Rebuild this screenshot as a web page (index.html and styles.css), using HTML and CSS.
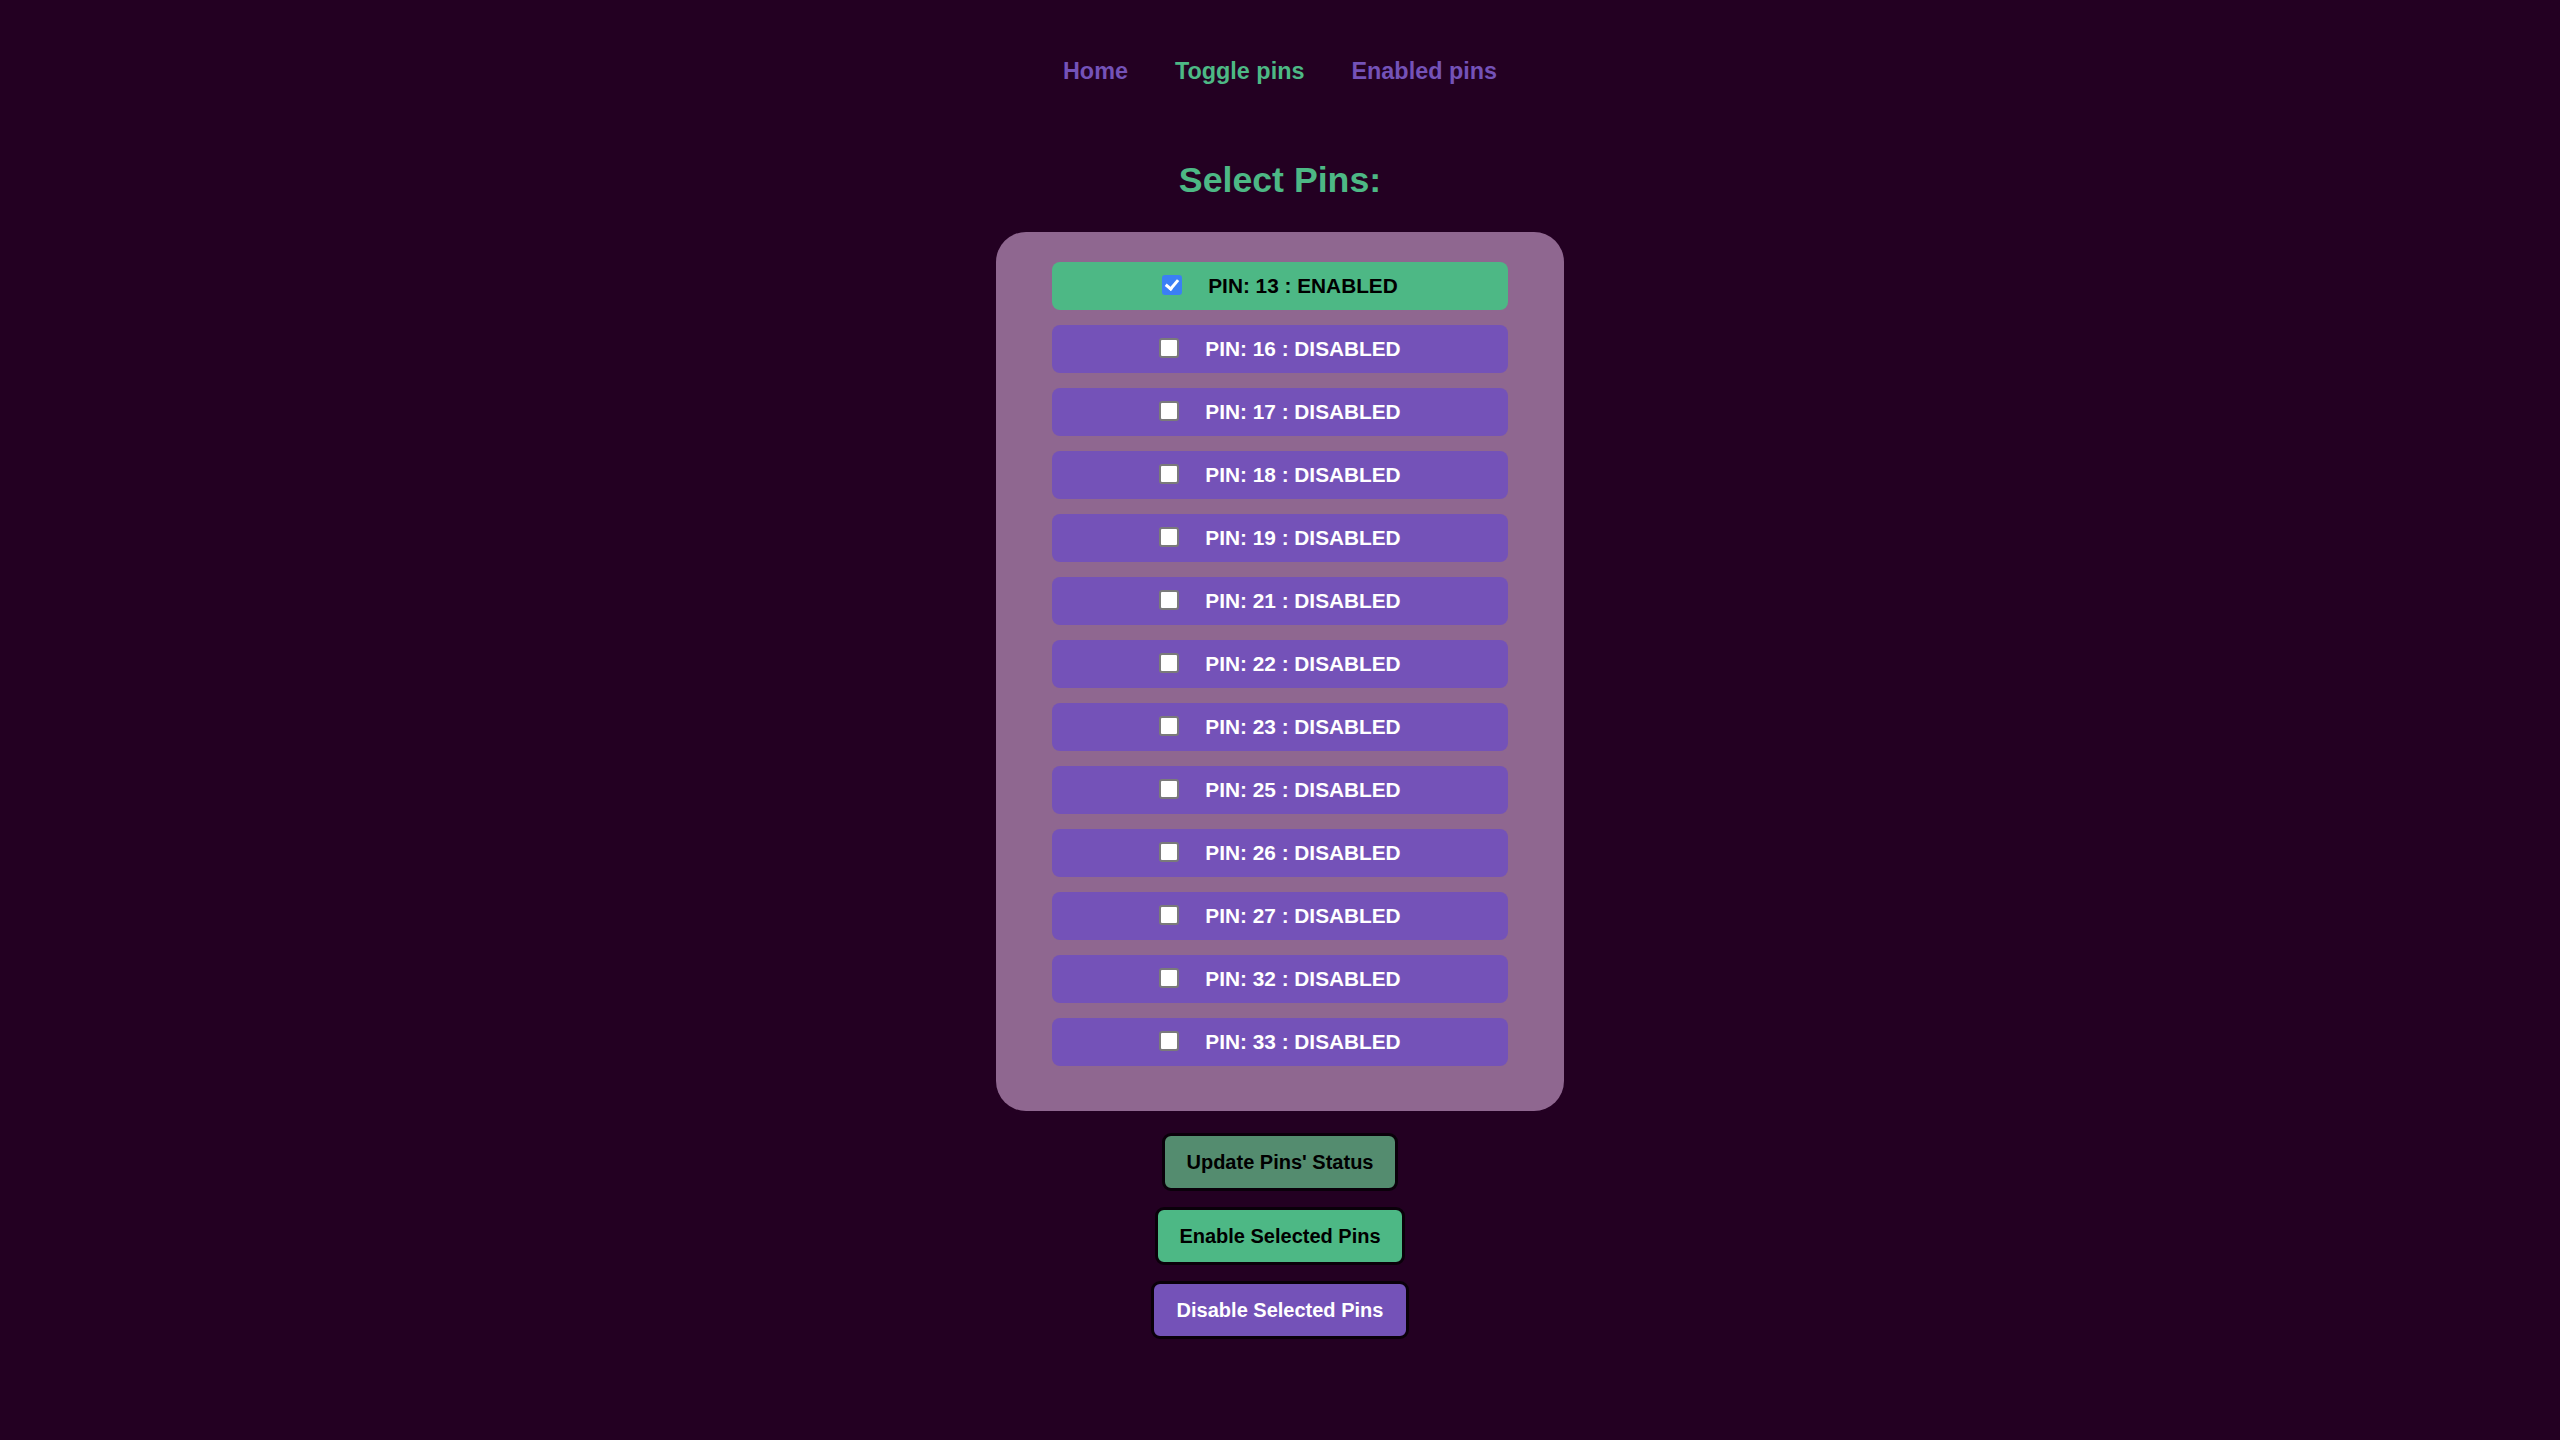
FILE: index.html
```html
<!DOCTYPE html>
<html lang="en">
<head>
<meta charset="utf-8">
<title>Toggle pins</title>
<link rel="stylesheet" href="styles.css">
</head>
<body>
<nav class="nav">
  <a class="nav-link" href="#">Home</a>
  <a class="nav-link active" href="#">Toggle pins</a>
  <a class="nav-link" href="#">Enabled pins</a>
</nav>
<main class="main">
  <h2 class="title">Select Pins:</h2>
  <form class="panel">
    <label class="pin on"><input class="box" type="checkbox" checked><span>PIN: 13 : ENABLED</span></label>
    <label class="pin"><input class="box" type="checkbox"><span>PIN: 16 : DISABLED</span></label>
    <label class="pin"><input class="box" type="checkbox"><span>PIN: 17 : DISABLED</span></label>
    <label class="pin"><input class="box" type="checkbox"><span>PIN: 18 : DISABLED</span></label>
    <label class="pin"><input class="box" type="checkbox"><span>PIN: 19 : DISABLED</span></label>
    <label class="pin"><input class="box" type="checkbox"><span>PIN: 21 : DISABLED</span></label>
    <label class="pin"><input class="box" type="checkbox"><span>PIN: 22 : DISABLED</span></label>
    <label class="pin"><input class="box" type="checkbox"><span>PIN: 23 : DISABLED</span></label>
    <label class="pin"><input class="box" type="checkbox"><span>PIN: 25 : DISABLED</span></label>
    <label class="pin"><input class="box" type="checkbox"><span>PIN: 26 : DISABLED</span></label>
    <label class="pin"><input class="box" type="checkbox"><span>PIN: 27 : DISABLED</span></label>
    <label class="pin"><input class="box" type="checkbox"><span>PIN: 32 : DISABLED</span></label>
    <label class="pin"><input class="box" type="checkbox"><span>PIN: 33 : DISABLED</span></label>
  </form>
  <div class="actions">
    <button class="btn btn-update" type="button">Update Pins' Status</button>
    <button class="btn btn-enable" type="button">Enable Selected Pins</button>
    <button class="btn btn-disable" type="button">Disable Selected Pins</button>
  </div>
</main>
</body>
</html>
```
FILE: styles.css
```css
html, body {
  margin: 0;
  padding: 0;
}
body {
  background: #230022;
  font-family: "Liberation Sans", Arial, sans-serif;
  min-height: 1440px;
}
.nav {
  display: flex;
  justify-content: center;
  gap: 47px;
  padding-top: 58px;
}
.nav-link {
  font-size: 23.4px;
  line-height: 27px;
  font-weight: bold;
  color: #7452b8;
  text-decoration: none;
}
.nav-link.active {
  color: #4db885;
}
.main {
  display: flex;
  flex-direction: column;
  align-items: center;
}
.title {
  margin: 75px 0 31px;
  font-size: 35.7px;
  line-height: 41px;
  font-weight: bold;
  color: #4db885;
}
.panel {
  box-sizing: border-box;
  width: 568px;
  padding: 30px 56px 45px;
  background: #8f6790;
  border-radius: 30px;
  display: flex;
  flex-direction: column;
  gap: 15px;
}
.pin {
  height: 48px;
  border-radius: 8px;
  background: #7452b8;
  color: #ffffff;
  display: flex;
  align-items: center;
  justify-content: center;
  gap: 26px;
  font-size: 20.8px;
  font-weight: bold;
}
.pin.on {
  background: #4db885;
  color: #000000;
}
.box {
  -webkit-appearance: none;
  appearance: none;
  box-sizing: border-box;
  position: relative;
  width: 20px;
  height: 20px;
  margin: 0 0 3px 0;
  border: 2px solid #7a7a7a;
  border-radius: 3px;
  background: #ffffff;
}
.box:checked {
  background: #3b7ff5;
  border-color: #3b7ff5;
}
.box:checked::after {
  content: "";
  position: absolute;
  left: 4px;
  top: 0px;
  width: 5px;
  height: 10px;
  border-right: 3px solid #ffffff;
  border-bottom: 3px solid #ffffff;
  transform: rotate(40deg);
}
.pin span {
  line-height: 24px;
}
.actions {
  margin-top: 22px;
  display: flex;
  flex-direction: column;
  align-items: center;
  gap: 16px;
}
.btn {
  font-family: "Liberation Sans", Arial, sans-serif;
  font-size: 20px;
  line-height: 24px;
  font-weight: bold;
  padding: 14px 21px;
  border: 3px solid #0a000a;
  border-radius: 9px;
  color: #000000;
}
.btn-update {
  background: #548c6f;
}
.btn-enable {
  background: #4db885;
}
.btn-disable {
  background: #7452b8;
  color: #ffffff;
  padding: 14px 23px;
}
```
